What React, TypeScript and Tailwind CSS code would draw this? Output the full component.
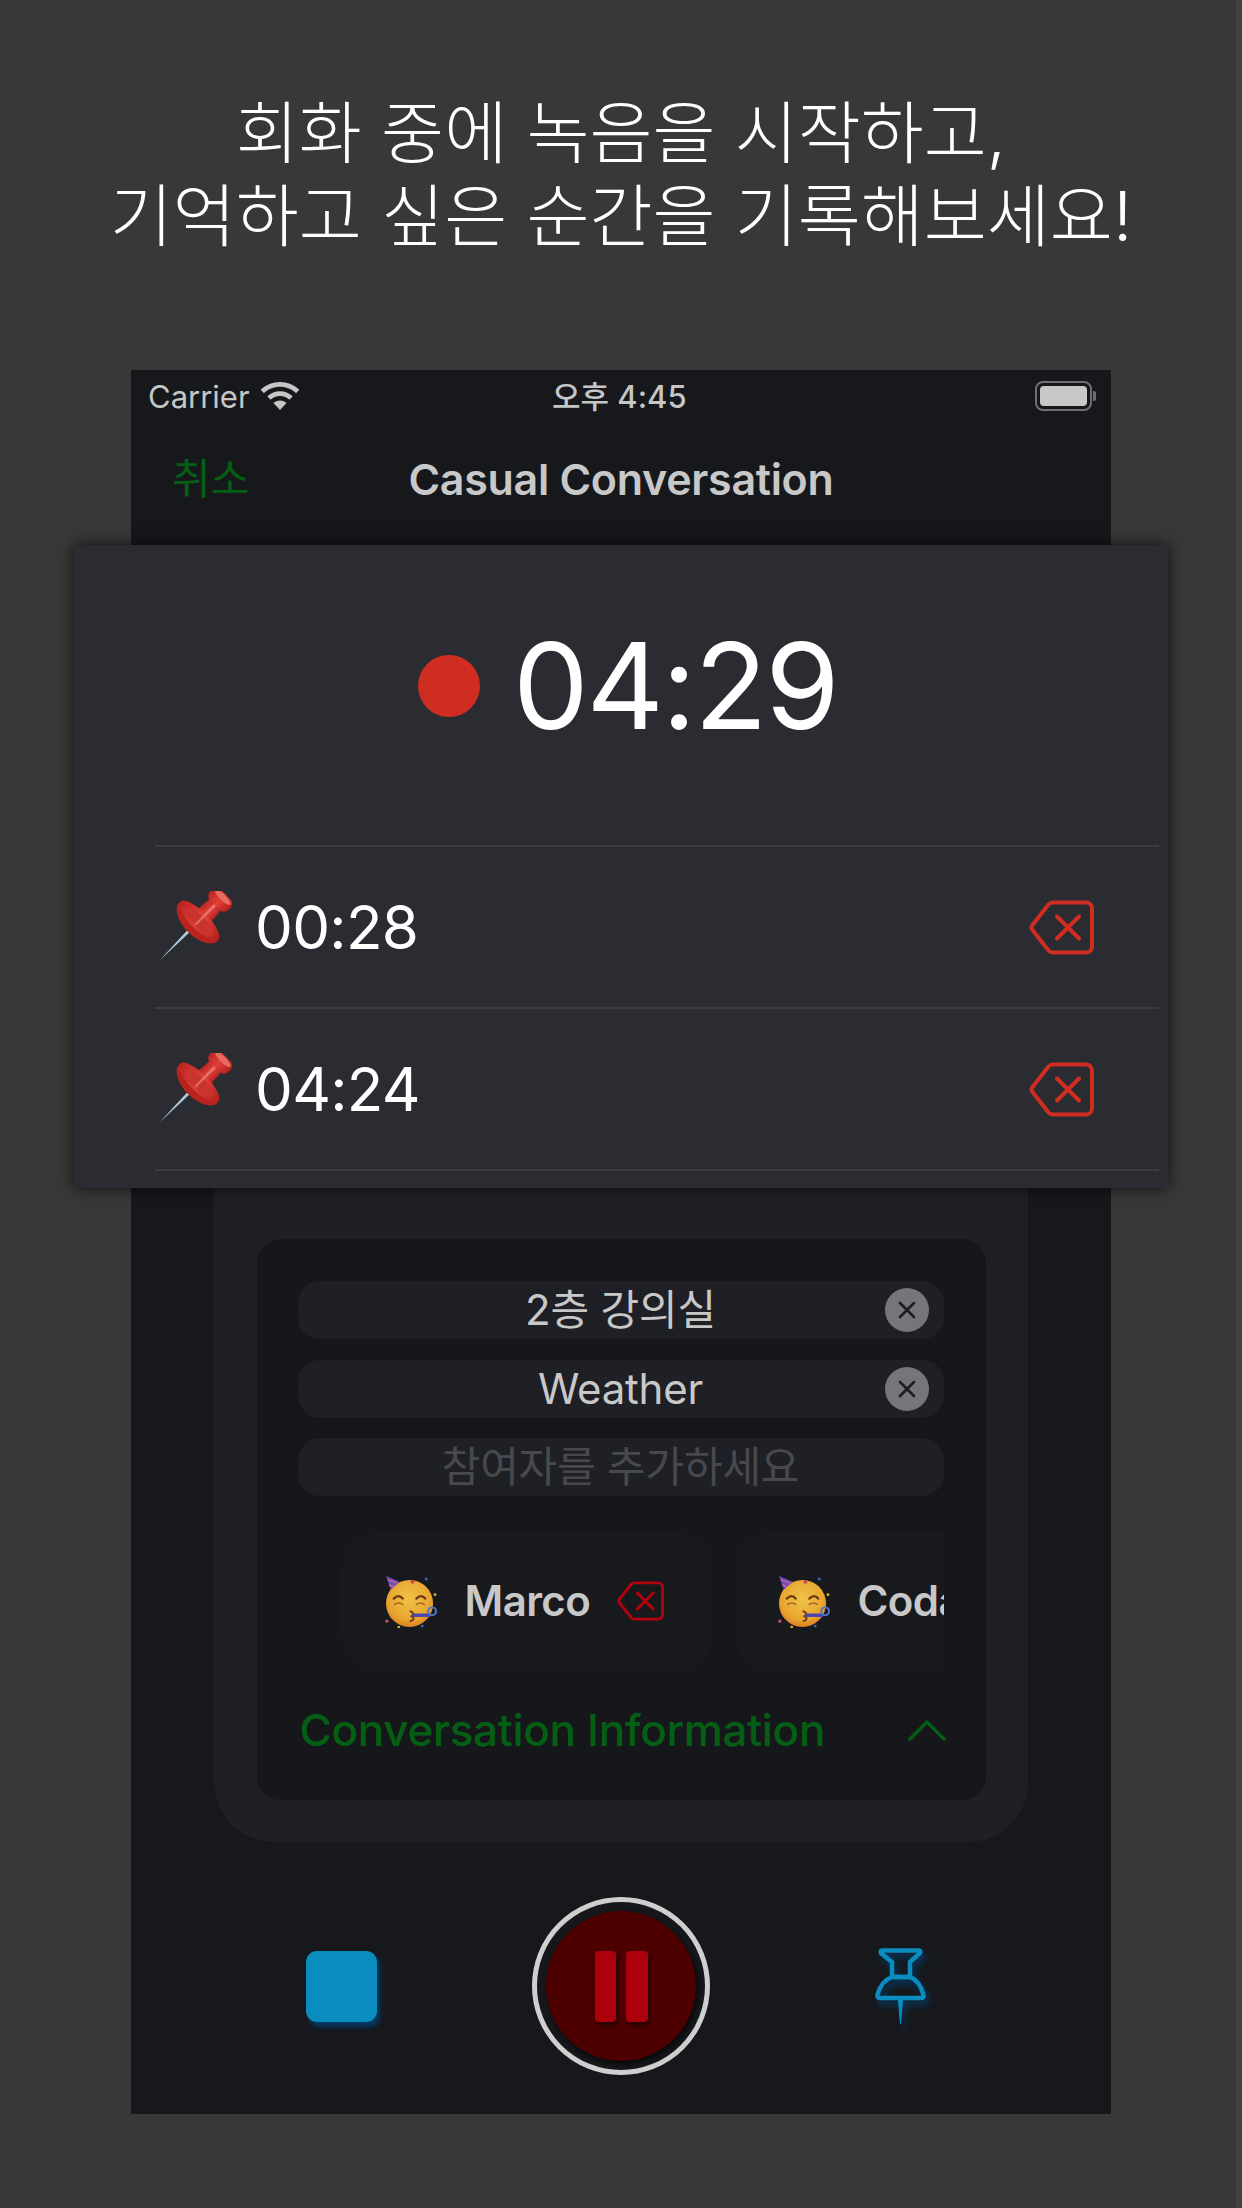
import type { ReactNode } from "react";

const FONT = "font-['Inter','Noto_Sans_CJK_KR',sans-serif]";

function DeleteIcon({ className, stroke }: { className: string; stroke: string }) {
  return (
    <svg viewBox="0 0 65 55" fill="none" className={className} stroke={stroke} strokeWidth="4" strokeLinecap="round" strokeLinejoin="round">
      <path d="M24 2.500H57a6 6 0 0 1 6 6v38a6 6 0 0 1-6 6H24a6 6 0 0 1-4.500-2L3.500 30a4 4 0 0 1 0-5L19.500 4.500a6 6 0 0 1 4.500-2Z" />
      <path d="M28 16.500 50 38.500M50 16.500 28 38.500" />
    </svg>
  );
}

function PinEmoji() {
  return (
    <svg viewBox="0 0 74 72" className="h-[72px] w-[74px] shrink-0">
      <defs>
        <linearGradient id="pinred" x1="0" x2="1" y1="0" y2="0">
          <stop offset="0" stopColor="#b8241f" />
          <stop offset="0.5" stopColor="#e2403a" />
          <stop offset="1" stopColor="#b3201c" />
        </linearGradient>
        <linearGradient id="needle" x1="0" x2="1" y1="0" y2="0">
          <stop offset="0" stopColor="#e8eef2" />
          <stop offset="1" stopColor="#6f9fc0" />
        </linearGradient>
      </defs>
      <g transform="translate(63 7) rotate(45)">
        <path d="M-2 36-0 88.500 2 36Z" fill="url(#needle)" />
        <path d="M-8 8h16l1.500 21h-19Z" fill="url(#pinred)" />
        <rect x="-13" y="-5" width="26" height="15" rx="6" fill="url(#pinred)" />
        <ellipse cx="0" cy="-1" rx="10.500" ry="3" fill="#e96a60" />
        <path d="M-27 34c0-5 12-9 27-9s27 4 27 9c0 7-12 14-27 14s-27-7-27-14Z" fill="#b8231e" />
        <ellipse cx="0" cy="32" rx="27" ry="9" fill="url(#pinred)" />
        <ellipse cx="0" cy="33" rx="19" ry="6" fill="#c9352e" />
        <path d="M-1.500 10 -1 38h2l.5-28Z" fill="#f0a8a0" opacity="0.5" />
      </g>
    </svg>
  );
}

function PartyFace() {
  return (
    <svg viewBox="0 0 56 54" className="h-[53px] w-[55px] shrink-0">
      <defs>
        <radialGradient id="face" cx="0.5" cy="0.4" r="0.65">
          <stop offset="0" stopColor="#f0c34a" />
          <stop offset="0.7" stopColor="#e8a52e" />
          <stop offset="1" stopColor="#d9731f" />
        </radialGradient>
      </defs>
      <ellipse cx="27" cy="29" rx="24" ry="24" fill="url(#face)" />
      <path d="M3 1 17 7 8 15Z" fill="#6a4fb5" />
      <path d="M5 5 14 8M6 10 11 12" stroke="#d85aa0" strokeWidth="1.500" />
      <circle cx="30" cy="7" r="2" fill="#c44a55" />
      <circle cx="44" cy="4" r="1.500" fill="#2c6fc0" />
      <circle cx="53" cy="20" r="1.500" fill="#d8b030" />
      <circle cx="4" cy="47" r="1.600" fill="#c4506a" />
      <circle cx="16" cy="53" r="1.400" fill="#d8b030" />
      <circle cx="40" cy="52" r="1.400" fill="#2c6fc0" />
      <path d="M11 24q5-5 9 0M34 24q5-5 9 0" fill="none" stroke="#6e3a12" strokeWidth="2.400" strokeLinecap="round" />
      <path d="M12 30q4-3 8 0M34 30q4-3 8 0" fill="none" stroke="#a8651c" strokeWidth="1.600" strokeLinecap="round" />
      <path d="M28 37q5 2 1 5q5 3-1 5" fill="none" stroke="#6e3a12" strokeWidth="2" strokeLinecap="round" />
      <path d="M30 41H48" stroke="#4a44b0" strokeWidth="3.500" />
      <circle cx="50" cy="37" r="4" fill="none" stroke="#4a7ac8" strokeWidth="2" />
    </svg>
  );
}

function WifiIcon() {
  return (
    <svg viewBox="0 0 40 28" className="h-[28px] w-[40px]" fill="#c6c6c6">
      <path d="M20 0C12.500 0 5.800 2.900.7 7.700l3.200 3.500C8.100 7.200 13.700 4.800 20 4.800s11.900 2.400 16.100 6.400l3.200-3.500C34.200 2.900 27.500 0 20 0Z" />
      <path d="M20 9.200c-4.900 0-9.300 1.900-12.700 5l3.200 3.500c2.500-2.300 5.800-3.700 9.500-3.700s7 1.400 9.500 3.700l3.200-3.500c-3.400-3.100-7.800-5-12.700-5Z" />
      <path d="M20 18.400c-2.600 0-4.900 1-6.600 2.600L20 28l6.600-7c-1.700-1.600-4-2.600-6.600-2.600Z" />
    </svg>
  );
}

function BatteryIcon() {
  return (
    <div className="flex items-center gap-[1px]">
      <div className="h-[30px] w-[57px] rounded-[8px] border-2 border-[#6f6f70] p-[3px]">
        <div className="h-full w-full rounded-[4px] bg-[#c8c8c8]" />
      </div>
      <div className="h-[10px] w-[3px] rounded-r-[2px] bg-[#6f6f70]" />
    </div>
  );
}

function ClearButton() {
  return (
    <div className="flex h-[44px] w-[44px] items-center justify-center rounded-full bg-[#75767b]">
      <svg viewBox="0 0 20 20" className="h-[20px] w-[20px]" stroke="#1c1d20" strokeWidth="2.600" strokeLinecap="round">
        <path d="M3 3 17 17M17 3 3 17" />
      </svg>
    </div>
  );
}

function InfoPill({ children, clear, muted }: { children: ReactNode; clear?: boolean; muted?: boolean }) {
  return (
    <div className="relative flex h-[58px] items-center justify-center rounded-[22px] bg-[#1f2025]">
      <span className={`text-[42px] leading-none tracking-[-0.2px] ${muted ? "text-[#48494d]" : "text-[#c8c8c8]"}`}>{children}</span>
      {clear ? (
        <div className="absolute right-[15px] top-[7px]">
          <ClearButton />
        </div>
      ) : null}
    </div>
  );
}

function Participant({ name, children }: { name: string; children?: ReactNode }) {
  return (
    <div className="flex h-[138px] w-[373px] shrink-0 items-center rounded-[36px] bg-[#18191c] pl-[42px]">
      <PartyFace />
      <span className="ml-[27px] text-[42px] font-semibold leading-none tracking-[-0.6px] text-[#c8c8c8]">{name}</span>
      {children}
    </div>
  );
}

function MarkRow({ time }: { time: string }) {
  return (
    <div className="flex h-[162px] items-center border-t-2 border-[#3c3d42] pl-[4px] pr-[65px]">
      <PinEmoji />
      <span className="ml-[22px] text-[60px] leading-none tracking-[-0.7px] text-white">{time}</span>
      <DeleteIcon className="ml-auto h-[55px] w-[65px]" stroke="#cf2d22" />
    </div>
  );
}

export default function App() {
  return (
    <div className={`${FONT} relative flex h-[2208px] w-[1242px] flex-col items-center overflow-hidden bg-[#383838]`}>
      <div className="absolute right-0 top-0 h-full w-[6px] bg-[#424242]" />

      <div className="pt-[92px] text-center text-[68.5px] font-light leading-[83px] text-white">
        <div>회화 중에 녹음을 시작하고,</div>
        <div>기억하고 싶은 순간을 기록해보세요!</div>
      </div>

      <div className="mt-[112px] flex h-[1744px] w-[980px] flex-col bg-[#16181c]">
        <div className="relative flex h-[52px] items-center justify-between pl-[17px] pr-[15px] text-[#c6c6c6]">
          <div className="flex items-center gap-[10px]">
            <span className="text-[31px] leading-none">Carrier</span>
            <WifiIcon />
          </div>
          <span className="absolute left-[421px] text-[31px] font-medium leading-none">오후 4:45</span>
          <BatteryIcon />
        </div>

        <div className="grid h-[114px] grid-cols-[1fr_auto_1fr] items-center px-[41px]">
          <span className="text-[42px] leading-none text-[#045f14]">취소</span>
          <span className="text-[43px] font-semibold leading-none tracking-[-0.3px] text-[#c8c8c8]">Casual Conversation</span>
          <span />
        </div>

        <div className="mx-[83px] mt-auto flex h-[740px] w-[814px] flex-col justify-end rounded-b-[60px] bg-[#1f2025] px-[42.5px] pb-[42px]">
          <div className="flex h-[561px] flex-col rounded-[24px] bg-[#16171a] pl-[41px] pr-[42px] pt-[42px]">
            <div className="flex flex-col gap-[20.5px]">
              <InfoPill clear>2층 강의실</InfoPill>
              <InfoPill clear>Weather</InfoPill>
              <InfoPill muted>참여자를 추가하세요</InfoPill>
            </div>

            <div className="mt-[36px] flex gap-[20px] overflow-hidden pl-[43px]">
              <Participant name="Marco">
                <DeleteIcon className="ml-[27px] h-[40px] w-[47px]" stroke="#b5000d" />
              </Participant>
              <Participant name="Coda" />
            </div>

            <div className="ml-[2px] mt-[38px] flex h-[44px] w-[646px] items-center justify-between">
              <span className="text-[44px] font-medium leading-none tracking-[-0.3px] text-[#045f14]">Conversation Information</span>
              <svg viewBox="0 0 38 22" fill="none" className="h-[22px] w-[38px]" stroke="#045f14" strokeWidth="3.500" strokeLinecap="round" strokeLinejoin="round">
                <path d="M2 20 19 3 36 20" />
              </svg>
            </div>
          </div>
        </div>

        <div className="flex items-center pb-[39px] pl-[175px] pt-[55px]">
          <div className="h-[71px] w-[71px] rounded-[11px] bg-[#0b8cbf] shadow-[3px_5px_5px_#043a63]" />

          <div className="ml-[155px] flex h-[178px] w-[178px] items-center justify-center rounded-full border-[5px] border-[#cfcfcf]">
            <div className="flex h-[150px] w-[150px] items-center justify-center gap-[10px] rounded-full bg-[#4d0000] shadow-[2px_3px_6px_rgba(0,0,0,0.75)]">
              <div className="h-[71px] w-[21px] rounded-[4px] bg-[#ae000b] shadow-[2px_3px_4px_rgba(0,0,0,0.6)]" />
              <div className="h-[71px] w-[22px] rounded-[4px] bg-[#ae000b] shadow-[2px_3px_4px_rgba(0,0,0,0.6)]" />
            </div>
          </div>

          <svg viewBox="0 0 51 77" fill="none" className="ml-[165px] h-[77px] w-[51px] drop-shadow-[3px_5px_3px_#043a63]" stroke="#0b8cbf" strokeWidth="4.500" strokeLinejoin="round">
            <path d="M7 2.500H44a1.500 1.500 0 0 1 1.200 2.400L35 14V29H17V14L5.800 4.900A1.500 1.500 0 0 1 7 2.500Z" />
            <path d="M17 29c-8 3-12.500 10-14.500 18-.3 1.500.5 3 2 3H46.500c1.500 0 2.300-1.500 2-3C46.500 39 43 32 35 29Z" />
            <path d="M23.300 50H27.700L25.500 76Z" fill="#0b8cbf" strokeWidth="1" />
          </svg>
        </div>
      </div>

      <div className="absolute left-[74px] top-[545px] h-[643px] w-[1094px] bg-[#2b2c31] pl-[81px] pr-[9px] shadow-[0_0_14px_rgba(0,0,0,0.7)]">
        <div className="flex h-[300px] items-center pb-[19px] pl-[263px]">
          <div className="h-[62px] w-[62px] rounded-full bg-[#cf2d22]" />
          <span className="ml-[33px] text-[120px] leading-none tracking-[-2.2px] text-white">04:29</span>
        </div>
        <MarkRow time="00:28" />
        <MarkRow time="04:24" />
        <div className="border-t-2 border-[#3c3d42]" />
      </div>
    </div>
  );
}
